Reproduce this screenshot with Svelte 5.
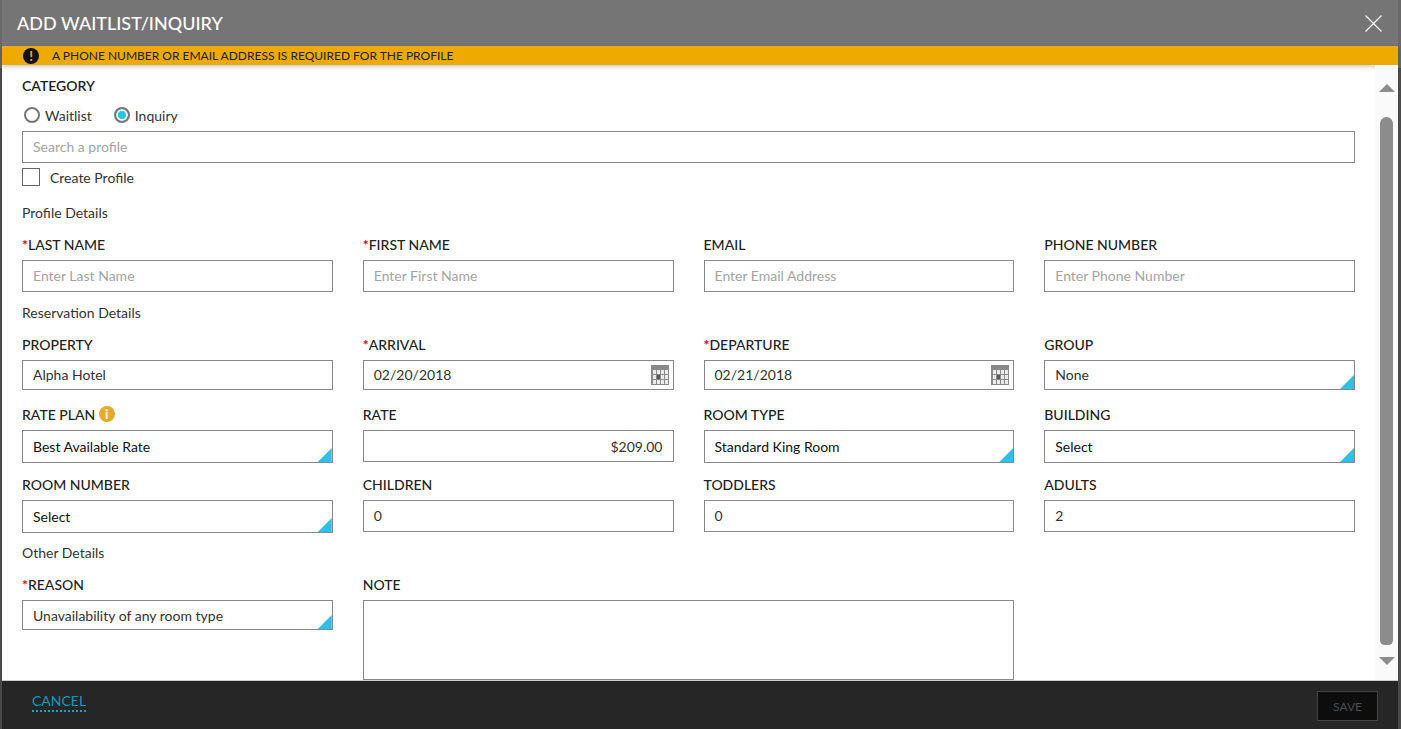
<script>
  const profile = [
    { label: 'LAST NAME', req: true, ph: 'Enter Last Name' },
    { label: 'FIRST NAME', req: true, ph: 'Enter First Name' },
    { label: 'EMAIL', ph: 'Enter Email Address' },
    { label: 'PHONE NUMBER', ph: 'Enter Phone Number' }
  ];
  const row1 = [
    { label: 'PROPERTY', value: 'Alpha Hotel' },
    { label: 'ARRIVAL', req: true, value: '02/20/2018', cal: true },
    { label: 'DEPARTURE', req: true, value: '02/21/2018', cal: true },
    { label: 'GROUP', value: 'None', select: true }
  ];
  const row2 = [
    { label: 'RATE PLAN', value: 'Best Available Rate', select: true, info: true, tall: true },
    { label: 'RATE', value: '$209.00', right: true },
    { label: 'ROOM TYPE', value: 'Standard King Room', select: true, tall: true },
    { label: 'BUILDING', value: 'Select', select: true, tall: true }
  ];
  const row3 = [
    { label: 'ROOM NUMBER', value: 'Select', select: true, tall: true },
    { label: 'CHILDREN', value: '0', num: true },
    { label: 'TODDLERS', value: '0', num: true },
    { label: 'ADULTS', value: '2', num: true }
  ];
</script>

{#snippet calIcon()}
  <svg class="cal" width="18" height="20" viewBox="0 0 18 20" aria-hidden="true">
    <rect width="18" height="20" fill="#8a8a8a" />
    <g fill="#ebebeb">
      {#each [5, 10, 15] as y}
        {#each [2, 6, 10, 14] as x}
          <rect {x} {y} width="3" height="4" />
        {/each}
      {/each}
    </g>
    <rect x="6" y="10" width="3" height="4" fill="#555" />
  </svg>
{/snippet}

{#snippet field(f)}
  <div class="field">
    <div class="label">
      {#if f.req}<span class="req">*</span>{/if}{f.label}
      {#if f.info}<span class="info">i</span>{/if}
    </div>
    <div class="box" class:tall={f.tall} class:ph={f.ph} class:num={f.num} class:right={f.right} class:lift={!f.tall && !f.right}>
      <span>{f.ph ?? f.value}</span>
      {#if f.cal}{@render calIcon()}{/if}
      {#if f.select}<i class="corner"></i>{/if}
    </div>
  </div>
{/snippet}

<div class="modal">
  <header class="head">
    <h1>ADD WAITLIST/INQUIRY</h1>
    <svg class="close" width="17" height="17" viewBox="0 0 17 17" aria-label="Close">
      <path d="M0.5 0.5 16.5 16.5M16.5 0.5 0.5 16.5" stroke="#fff" stroke-width="1.1" fill="none" />
    </svg>
  </header>
  <div class="banner">
    <span class="warn">!</span>
    <span>A PHONE NUMBER OR EMAIL ADDRESS IS REQUIRED FOR THE PROFILE</span>
  </div>

  <div class="main">
    <div class="content">
      <div class="label cat">CATEGORY</div>
      <div class="radios">
        <label class="radio"><i class="dot"></i>Waitlist</label>
        <label class="radio"><i class="dot on"></i>Inquiry</label>
      </div>
      <div class="box search ph lift"><span>Search a profile</span></div>
      <label class="check"><i class="cb"></i>Create Profile</label>

      <div class="section first">Profile Details</div>
      <div class="grid">
        {#each profile as f}{@render field(f)}{/each}
      </div>

      <div class="section">Reservation Details</div>
      <div class="grid">
        {#each row1 as f}{@render field(f)}{/each}
      </div>
      <div class="grid next">
        {#each row2 as f}{@render field(f)}{/each}
      </div>
      <div class="grid last">
        {#each row3 as f}{@render field(f)}{/each}
      </div>

      <div class="section other">Other Details</div>
      <div class="grid">
        <div class="field">
          <div class="label"><span class="req">*</span>REASON</div>
          <div class="box"><span>Unavailability of any room type</span><i class="corner"></i></div>
        </div>
        <div class="field wide">
          <div class="label">NOTE</div>
          <div class="note"></div>
        </div>
      </div>
    </div>
    <div class="scroll">
      <i class="arrow up"></i>
      <i class="thumb"></i>
      <i class="arrow down"></i>
    </div>
  </div>

  <footer class="foot">
    <span class="cancel">CANCEL</span>
    <span class="save">SAVE</span>
  </footer>
</div>

<style>
  :global(body) {
    margin: 0;
    background: linear-gradient(#686868 0 68px, #4a4a4a 68px);
    font-family: Lato, "Open Sans", sans-serif;
    overflow: hidden;
  }
  .modal {
    height: 729px;
    margin: 0 3px 0 2px;
    display: flex;
    flex-direction: column;
    background: #fff;
    color: #222;
  }
  .head {
    height: 46px;
    flex: none;
    background: #757575;
    display: flex;
    align-items: center;
    justify-content: space-between;
    padding: 0 16px 0 15px;
  }
  h1 {
    margin: 0;
    font-size: 18px;
    font-weight: 500;
    color: #fff;
  }
  .banner {
    height: 19px;
    flex: none;
    background: #eeaa00;
    display: flex;
    align-items: center;
    gap: 13px;
    padding-left: 21px;
    font-size: 12px;
    color: #222;
    box-shadow: 0 2px 4px rgba(0, 0, 0, .2);
    position: relative;
  }
  .warn {
    width: 16px;
    height: 16px;
    border-radius: 50%;
    background: #111;
    color: #eeaa00;
    font-size: 13px;
    font-weight: 900;
    line-height: 16px;
    text-align: center;
  }
  .main {
    flex: 1;
    min-height: 0;
    display: flex;
    overflow: hidden;
  }
  .content {
    flex: 1;
    padding: 12px 20px 0 20px;
  }
  .label {
    font-size: 14px;
    line-height: 18px;
    font-weight: 500;
    color: #222;
    white-space: nowrap;
  }
  .cat { font-weight: 600; }
  .req { color: #e0001b; font-weight: 700; }
  .radios {
    display: flex;
    gap: 22px;
    margin-top: 11px;
    height: 18px;
    padding-left: 2px;
  }
  .radio, .check {
    display: flex;
    align-items: center;
    font-size: 14px;
    color: #333;
  }
  .dot {
    width: 12px;
    height: 12px;
    border: 2px solid #777;
    border-radius: 50%;
    margin-right: 5px;
    box-sizing: content-box;
  }
  .dot.on {
    background: #2ec0e8;
    box-shadow: inset 0 0 0 2px #fff;
  }
  .box {
    box-sizing: border-box;
    height: 30px;
    border: 1px solid #888;
    background: #fff;
    display: flex;
    align-items: center;
    padding: 0 10px;
    font-size: 14px;
    color: #333;
    position: relative;
  }
  .box.lift { padding-bottom: 2px; }
  .box.tall { height: 33px; color: #111; }
  .box.ph { color: #a3a3a3; height: 32px; }
  .box.num { height: 32px; }
  .box.right { justify-content: flex-end; height: 32px; }
  .search { margin-top: 7px; }
  .check {
    margin-top: 5px;
    height: 18px;
  }
  .cb {
    width: 18px;
    height: 18px;
    box-sizing: border-box;
    border: 1px solid #666;
    margin-right: 10px;
  }
  .section {
    font-size: 14px;
    line-height: 18px;
    color: #333;
    margin-top: 12px;
  }
  .section.first { margin-top: 18px; }
  .section.other { margin-top: 11px; }
  .grid {
    display: grid;
    grid-template-columns: repeat(4, 1fr);
    column-gap: 30px;
    margin-top: 14px;
  }
  .grid.next { margin-top: 16px; }
  .grid.last { margin-top: 13px; }
  .field .label { margin-bottom: 6px; }
  .wide { grid-column: span 2; }
  .note {
    height: 80px;
    box-sizing: border-box;
    border: 1px solid #888;
  }
  .info {
    display: inline-block;
    width: 16px;
    height: 16px;
    border-radius: 50%;
    background: #e8a92f;
    color: #fff;
    font-size: 13px;
    font-weight: 900;
    line-height: 16px;
    text-align: center;
    margin-left: 0;
    vertical-align: 1px;
  }
  .cal {
    position: absolute;
    right: 4px;
    top: 4px;
  }
  .corner {
    position: absolute;
    right: 0;
    bottom: 0;
    width: 14px;
    height: 14px;
    background: #2ec0e8;
    clip-path: polygon(100% 0, 100% 100%, 0 100%);
  }
  .scroll {
    width: 23px;
    flex: none;
    background: #fafafa;
    position: relative;
  }
  .thumb {
    position: absolute;
    left: 5px;
    top: 52px;
    width: 13px;
    height: 528px;
    border-radius: 7px 7px 5px 5px;
    background: #8c8c8c;
  }
  .arrow {
    position: absolute;
    left: 4px;
    width: 0;
    height: 0;
    border-left: 8px solid transparent;
    border-right: 8px solid transparent;
  }
  .arrow.up { top: 19px; border-bottom: 8px solid #8c8c8c; }
  .arrow.down { top: 592px; border-top: 8px solid #8c8c8c; }
  .foot {
    height: 49px;
    flex: none;
    box-sizing: border-box;
    background: #262626;
    border-top: 1px solid #ccc;
    display: flex;
    align-items: flex-start;
    justify-content: space-between;
    padding: 10px 20px 0 30px;
  }
  .cancel {
    font-size: 14px;
    color: #0f9ac4;
    border-bottom: 2px dotted #0fa5d3;
    line-height: 19px;
  }
  .save {
    width: 61px;
    height: 30px;
    box-sizing: border-box;
    border: 1px solid #444;
    background: #0d0d0d;
    color: #4e4e4e;
    font-size: 12px;
    display: flex;
    align-items: center;
    justify-content: center;
  }
</style>
